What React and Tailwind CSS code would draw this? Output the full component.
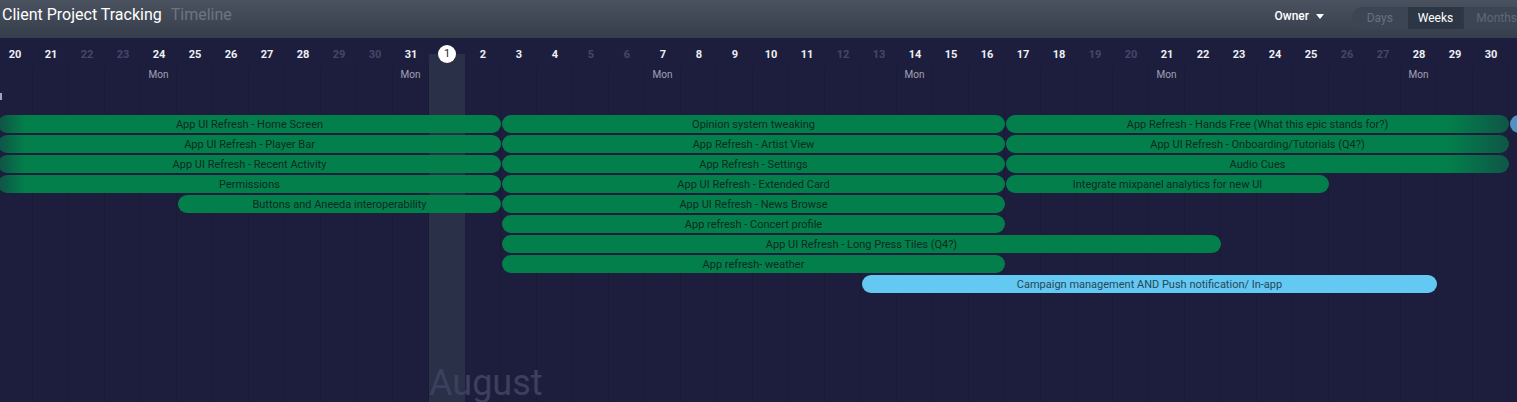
import { Fragment } from 'react';

const DAYS = [
  20, 21, 22, 23, 24, 25, 26, 27, 28, 29, 30, 31,
  1, 2, 3, 4, 5, 6, 7, 8, 9, 10, 11, 12, 13, 14, 15, 16, 17, 18, 19, 20,
  21, 22, 23, 24, 25, 26, 27, 28, 29, 30, 31,
];
const WEEKEND = new Set([2, 3, 9, 10, 16, 17, 23, 24, 30, 31, 37, 38]);
const MONDAYS = new Set([4, 11, 18, 25, 32, 39]);
const TODAY = 12;

// start column, span, row (0-based). columns are 36px wide starting at x=-3
const BARS = [
  { label: 'App UI Refresh - Home Screen', col: 0, span: 14, row: 0, fadeLeft: true },
  { label: 'App UI Refresh - Player Bar', col: 0, span: 14, row: 1, fadeLeft: true },
  { label: 'App UI Refresh - Recent Activity', col: 0, span: 14, row: 2, fadeLeft: true },
  { label: 'Permissions', col: 0, span: 14, row: 3, fadeLeft: true },
  { label: 'Buttons and Aneeda interoperability', col: 5, span: 9, row: 4 },
  { label: 'Opinion system tweaking', col: 14, span: 14, row: 0 },
  { label: 'App Refresh - Artist View', col: 14, span: 14, row: 1 },
  { label: 'App Refresh - Settings', col: 14, span: 14, row: 2 },
  { label: 'App UI Refresh - Extended Card', col: 14, span: 14, row: 3 },
  { label: 'App UI Refresh - News Browse', col: 14, span: 14, row: 4 },
  { label: 'App refresh - Concert profile', col: 14, span: 14, row: 5 },
  { label: 'App UI Refresh - Long Press Tiles (Q4?)', col: 14, span: 20, row: 6 },
  { label: 'App refresh- weather', col: 14, span: 14, row: 7 },
  { label: 'Campaign management AND Push notification/ In-app', col: 24, span: 16, row: 8, blue: true },
  { label: 'App Refresh - Hands Free (What this epic stands for?)', col: 28, span: 14, row: 0, fadeRight: true },
  { label: 'App UI Refresh - Onboarding/Tutorials (Q4?)', col: 28, span: 14, row: 1, fadeRight: true },
  { label: 'Audio Cues', col: 28, span: 14, row: 2, fadeRight: true },
  { label: 'Integrate mixpanel analytics for new UI', col: 28, span: 9, row: 3 },
  { label: '', col: 42, span: 2, row: 0, steel: true },
];

function barClass(b) {
  if (b.blue) return 'bg-[#63c8f2] text-[#24485a]';
  if (b.steel) return 'bg-[#5291c6]';
  if (b.fadeLeft) return 'bg-[linear-gradient(to_right,#0f5646_3px,#037f4b_26px)] text-[#0d2a22]';
  if (b.fadeRight) return 'bg-[linear-gradient(to_right,#037f4b_88%,#0f5646)] text-[#0d2a22]';
  return 'bg-[#037f4b] text-[#0d2a22]';
}

export default function App() {
  return (
    <div
      className="w-[1517px] h-[402px] overflow-hidden bg-[#1d1e3d] text-white"
      style={{ fontFamily: 'Roboto, "Liberation Sans", sans-serif' }}
    >
      <Header />
      <div className="relative h-[364px] overflow-hidden">
        <div className="flex -ml-[3px] h-full">
          {DAYS.map((d, i) => (
            <DayColumn key={i} day={d} index={i} />
          ))}
        </div>

        <div className="absolute left-0 top-[55px] w-[2px] h-[7px] bg-[#a3a3b3]" />

        <div className="absolute left-[-3px] top-[77px] grid grid-cols-[repeat(44,36px)] auto-rows-[20px]">
          {BARS.map((b, i) => (
            <div
              key={i}
              className={`ml-px h-[18px] rounded-[9px] flex items-center justify-center text-[11px] leading-none whitespace-nowrap overflow-hidden ${barClass(b)}`}
              style={{ gridColumn: `${b.col + 1} / span ${b.span}`, gridRow: b.row + 1 }}
            >
              {b.label}
            </div>
          ))}
        </div>

        <div className="absolute left-[429px] top-[327px] text-[36px] leading-[36px] text-[#3d3f5e]">
          August
          <div className="ml-[14px] w-[89px] h-[2px] bg-[#3d3f5e] mt-[1px]" />
        </div>
      </div>
    </div>
  );
}

function Header() {
  return (
    <div className="h-[38px] flex bg-[linear-gradient(to_bottom,#4a525f,#363e4b)]">
      <div className="pl-[2px] pt-[5px] flex items-baseline gap-[9px] text-[16px] leading-[20px]">
        <span className="text-white">Client Project Tracking</span>
        <span className="text-[#6d7581]">Timeline</span>
      </div>
      <div className="ml-auto flex items-start pt-[7px]">
        <div className="flex items-center h-[18px] mr-[28px] text-[12px] font-medium text-white">
          Owner
          <svg width="8" height="5" viewBox="0 0 8 5" className="ml-[7px]">
            <path d="M0 0h8L4 5z" fill="#fff" />
          </svg>
        </div>
        <div className="flex h-[22px] w-[165px] text-[12px] overflow-hidden rounded-l-full bg-[#3b4553]">
          <div className="w-[59px] flex items-center justify-center text-[#687180]">Days</div>
          <div className="w-[59px] flex items-center justify-center bg-[#2c3645] text-white">Weeks</div>
          <div className="flex-1 flex items-center pl-[12px] border-l border-[#2e3846] text-[#5f6875]">
            Months
          </div>
        </div>
      </div>
    </div>
  );
}

function DayColumn({ day, index }) {
  const today = index === TODAY;
  const dim = WEEKEND.has(index);
  return (
    <div className={`w-[36px] shrink-0 flex flex-col ${today ? 'bg-[linear-gradient(to_bottom,transparent_16px,#2a3047_16px)]' : ''}`}>
      <div className="h-[29px] flex justify-center">
        {today ? (
          <div className="mt-[7px] w-[18px] h-[18px] rounded-full bg-white text-[#1d1e3d] text-[11px] flex items-center justify-center">
            {day}
          </div>
        ) : (
          <span className={`pt-[9px] text-[11px] leading-[16px] font-bold ${dim ? 'text-[#45476a]' : 'text-[#eef0f5]'}`}>
            {day}
          </span>
        )}
      </div>
      <div className={`flex-1 border-r border-[#191a34] text-center ${today ? 'border-transparent' : ''}`}>
        {MONDAYS.has(index) && (
          <span className="block pt-[2px] text-[10px] leading-[12px] text-[#a1a2b4]">Mon</span>
        )}
      </div>
    </div>
  );
}
